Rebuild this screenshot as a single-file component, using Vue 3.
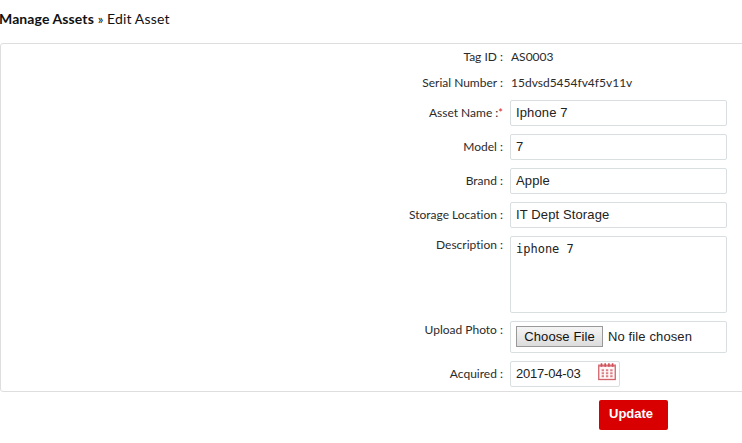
<script setup>
import { ref } from 'vue'

const fields = ref([
  { label: 'Asset Name :', required: true, value: 'Iphone 7' },
  { label: 'Model :', value: '7' },
  { label: 'Brand :', value: 'Apple' },
  { label: 'Storage Location :', value: 'IT Dept Storage' },
])
const description = ref('iphone 7')
const acquired = ref('2017-04-03')
</script>

<template>
  <main class="page">
    <h1 class="crumbs"><b>Manage Assets</b> <span class="sep">»</span> <span class="current">Edit Asset</span></h1>
    <form class="panel" @submit.prevent>
      <div class="row info">
        <span class="label">Tag ID :</span><span class="text">AS0003</span>
      </div>
      <div class="row info last">
        <span class="label">Serial Number :</span><span class="text serial">15dvsd5454fv4f5v11v</span>
      </div>
      <div v-for="f in fields" :key="f.label" class="row">
        <label class="label">{{ f.label }}<i v-if="f.required" class="star">*</i></label>
        <input v-model="f.value" class="box" type="text" />
      </div>
      <div class="row">
        <label class="label top">Description :</label>
        <textarea v-model="description" class="box area"></textarea>
      </div>
      <div class="row">
        <label class="label top">Upload Photo :</label>
        <div class="box file">
          <button type="button" class="choose">Choose File</button>
          <span>No file chosen</span>
        </div>
      </div>
      <div class="row">
        <label class="label">Acquired :</label>
        <div class="box date">
          <span>{{ acquired }}</span>
          <svg class="calendar" width="18" height="18" viewBox="0 0 18 18">
            <rect x=".75" y="2.5" width="16.5" height="14" fill="#fff8f8" stroke="#d2626a" stroke-width="1.3" />
            <path d="M0 2.6h18" stroke="#d8747b" stroke-width="2" />
            <path d="M3.5 .3v3.4M7.2 .3v3.4M10.9 .3v3.4M14.6 .3v3.4" stroke="#cf4f58" stroke-width="1.6" />
            <path d="M3.6 7.2h11M3.6 10.2h11M3.6 13.2h11" stroke="#dc8087" stroke-width="2" stroke-dasharray="2.4 1.9" />
          </svg>
        </div>
      </div>
    </form>
    <button type="button" class="update">Update</button>
  </main>
</template>

<style>
body { background: #fff; overflow: hidden; }
</style>

<style scoped>
.page { width: 742px; height: 443px; overflow: hidden; color: #2b2b2b; font-family: Lato, sans-serif; font-variant-ligatures: none; }
.page * { box-sizing: border-box; }
.crumbs { height: 43px; margin: 0; padding-top: 9px; font-size: 14px; line-height: 20px; font-weight: 400; color: #111; white-space: nowrap; letter-spacing: .1px; }
.crumbs b { margin-left: -1px; }
.sep { font-size: 13px; }
.current { letter-spacing: .15px; }
.panel { width: 760px; height: 349px; border: 1px solid #dedede; border-radius: 3px; }
.row { display: flex; align-items: flex-start; margin-bottom: 8px; }
.info { height: 26px; margin-bottom: 0; }
.info.last { margin-bottom: 4px; }
.label { width: 509px; padding-right: 7px; flex: none; text-align: right; font-size: 12px; line-height: 26px; white-space: nowrap; }
.top { line-height: 18px; }
.star { color: #d22; font-style: normal; font-size: 11px; }
.text { padding-left: 1px; font-size: 12px; line-height: 26px; }
.box { width: 217px; height: 26px; margin: 0; padding: 0 5px 2px; border: 1px solid #d9dfe1; border-radius: 2px; background: #fff; color: #222; font: 13px "Liberation Sans", Arial, sans-serif; letter-spacing: .12px; outline: 0; display: flex; align-items: center; }
.area { height: 77px; padding-top: 5px; font: 12px/15px "DejaVu Sans Mono", monospace; letter-spacing: 0; resize: none; }
.file { height: 32px; gap: 5px; }
.choose { width: 87px; height: 21px; padding: 0; border: 1px solid #999; background: linear-gradient(#f5f5f5, #dcdcdc); font: inherit; color: #111; letter-spacing: .1px; white-space: nowrap; }
.date { width: 110px; justify-content: space-between; padding-right: 3px; letter-spacing: -.2px; }
.calendar { margin-top: -2px; }
.update { display: block; width: 69px; height: 30px; margin: 8px 0 0 599px; padding: 0 0 3px 10px; border: 0; border-radius: 2px; background: #d80000; color: #fff; text-align: left; font: bold 13px "Liberation Sans", Arial, sans-serif; }
</style>
